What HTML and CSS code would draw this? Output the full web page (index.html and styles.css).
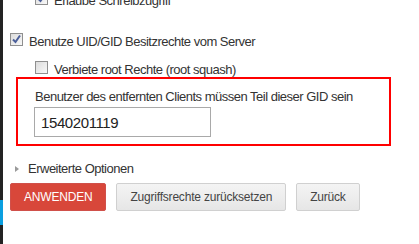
FILE: index.html
```html
<!DOCTYPE html>
<html lang="de">
<head>
    <meta charset="UTF-8">
    <title>NFS Freigabe</title>
    <link rel="stylesheet" href="styles.css">
</head>
<body>
    <div class="page">
        <div class="sidebar">
            <div class="sidebar-item"></div>
            <div class="sidebar-item active"></div>
        </div>

        <div class="content">
            <!-- scrolled: first option is cut off at the top -->
            <div class="check-row sub first">
                <span class="box checked">
                    <svg width="11" height="11" viewBox="0 0 11 11"><path d="M2 5.5 L4.5 8 L9 1.5" fill="none" stroke="#4b5f9a" stroke-width="2"/></svg>
                </span>
                <span>Erlaube Schreibzugriff</span>
            </div>

            <div class="check-row main">
                <span class="box checked">
                    <svg width="11" height="11" viewBox="0 0 11 11"><path d="M2 5.5 L4.5 8 L9 1.5" fill="none" stroke="#4b5f9a" stroke-width="2"/></svg>
                </span>
                <span>Benutze UID/GID Besitzrechte vom Server</span>
            </div>

            <div class="check-row sub">
                <span class="box"></span>
                <span>Verbiete root Rechte (root squash)</span>
            </div>

            <div class="highlight">
                <label for="gid" class="field-label">Benutzer des entfernten Clients müssen Teil dieser GID sein</label>
                <input type="text" id="gid" class="field-input" value="1540201119">
            </div>

            <div class="advanced">
                <span class="arrow"></span>
                <span>Erweiterte Optionen</span>
            </div>

            <div class="actions">
                <button class="btn btn-primary">ANWENDEN</button>
                <button class="btn">Zugriffsrechte zurücksetzen</button>
                <button class="btn">Zurück</button>
            </div>
        </div>
    </div>
</body>
</html>
```

FILE: styles.css
```css
body {
    margin: 0;
    font-family: "Liberation Sans", Arial, sans-serif;
    font-size: 13px;
    letter-spacing: -0.5px;
    color: #333;
    background-color: #fff;
    overflow: hidden;
}
.page {
    display: flex;
    height: 244px;
}
.sidebar {
    width: 3px;
    background-color: #232323;
    display: flex;
    flex-direction: column;
}
.sidebar-item {
    height: 200px;
}
.sidebar-item.active {
    height: 25px;
    background-color: #0a9fe0;
}
.content {
    flex: 1;
    padding-left: 7px;
    margin-top: -6px;
}
.check-row {
    display: flex;
    align-items: flex-start;
    gap: 6px;
    line-height: 14px;
    height: 14px;
    white-space: nowrap;
}
.check-row.main {
    margin-top: 27px;
}
.check-row.sub {
    padding-left: 25px;
    margin-top: 14px;
}
.check-row.sub.first {
    margin-top: 0;
}
.box {
    width: 11px;
    height: 11px;
    margin-top: -2px;
    border: 1px solid #8f8f8f;
    background: linear-gradient(135deg, #dcdcdc, #f8f8f8);
    display: flex;
    align-items: center;
    justify-content: center;
    flex-shrink: 0;
}
.highlight {
    width: 339px;
    margin-left: 6px;
    border: 2px solid #ff0000;
    padding: 10px 16px 7px 16px;
}
.field-label {
    display: block;
    line-height: 16px;
    padding-left: 1px;
    margin-bottom: 2px;
    white-space: nowrap;
}
.field-input {
    box-sizing: border-box;
    width: 177px;
    height: 30px;
    margin: 0;
    padding: 0 6px;
    border: 1px solid #a9a9a9;
    border-radius: 0;
    font-family: "Liberation Sans", Arial, sans-serif;
    font-size: 15px;
    letter-spacing: -0.4px;
    color: #222;
}
.advanced {
    display: flex;
    align-items: center;
    gap: 9px;
    line-height: 14px;
    margin-top: 16px;
    padding-left: 5px;
}
.arrow {
    width: 0;
    height: 0;
    border-top: 3px solid transparent;
    border-bottom: 3px solid transparent;
    border-left: 4px solid #9a9a9a;
}
.actions {
    display: flex;
    gap: 10px;
    margin-top: 7px;
}
.btn {
    height: 28px;
    padding: 0 13px;
    margin: 0;
    font-family: "Liberation Sans", Arial, sans-serif;
    font-size: 12px;
    letter-spacing: -0.2px;
    color: #444;
    background: linear-gradient(#f4f4f4, #e6e6e6);
    border: 1px solid #d0d0d0;
    border-radius: 2px;
    cursor: pointer;
}
.btn-primary {
    color: #fff;
    background: #d8473a;
    border-color: #d0504a;
}
```
